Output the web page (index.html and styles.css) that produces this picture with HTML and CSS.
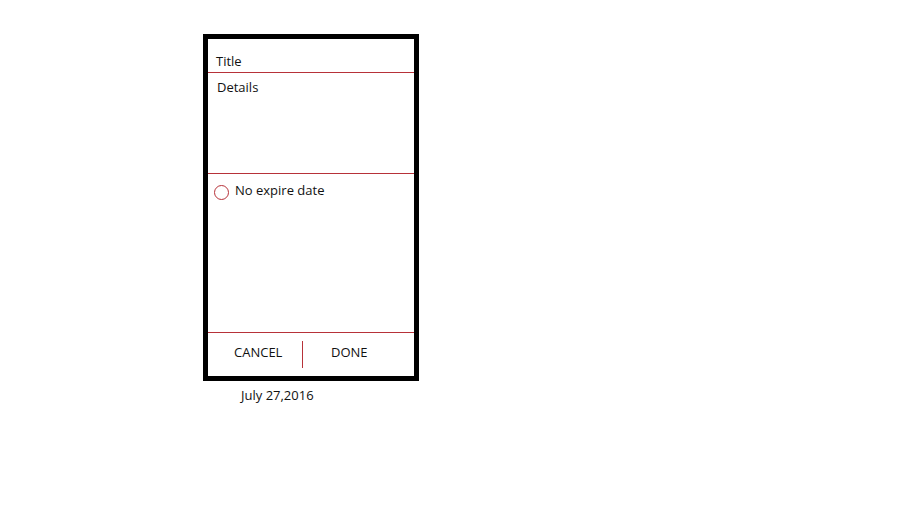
FILE: index.html
```html
<!DOCTYPE html>
<html>
<head>
<meta charset="utf-8">
<link rel="stylesheet" href="styles.css">
</head>
<body>
<div class="page">
  <div class="phone">
    <div class="row title-row"><span class="label">Title</span></div>
    <div class="row details-row"><span class="label">Details</span></div>
    <div class="row option-row">
      <span class="radio"></span>
      <span class="label">No expire date</span>
    </div>
    <div class="actions">
      <span class="btn cancel">CANCEL</span>
      <span class="divider"></span>
      <span class="btn done">DONE</span>
    </div>
  </div>
  <div class="date">July 27,2016</div>
</div>
</body>
</html>
```

FILE: styles.css
```css
html, body {
  margin: 0;
  padding: 0;
  background: #ffffff;
}
body {
  font-family: "Open Sans", "Noto Sans", "DejaVu Sans", sans-serif;
  font-size: 13px;
  color: #111111;
  width: 900px;
  height: 507px;
  overflow: hidden;
}
.page {
  padding-top: 34px;
  padding-left: 203px;
}
.phone {
  box-sizing: border-box;
  width: 216px;
  height: 347px;
  border: 5px solid #000000;
  display: flex;
  flex-direction: column;
}
.row {
  border-bottom: 1px solid #b73239;
  display: flex;
  align-items: flex-start;
}
.title-row {
  height: 33px;
  padding-left: 8px;
  align-items: flex-end;
}
.title-row .label {
  line-height: 17px;
  margin-bottom: 2px;
}
.details-row {
  height: 100px;
  padding-left: 9px;
}
.details-row .label {
  line-height: 17px;
  margin-top: 6px;
}
.option-row {
  height: 158px;
  padding-left: 6px;
}
.radio {
  box-sizing: border-box;
  width: 15px;
  height: 15px;
  border: 1px solid #b73239;
  border-radius: 50%;
  margin-top: 11px;
}
.option-row .label {
  line-height: 17px;
  margin-top: 8px;
  margin-left: 6px;
}
.actions {
  flex: 1;
  display: flex;
  align-items: flex-start;
}
.btn {
  line-height: 17px;
  margin-top: 11px;
}
.cancel {
  margin-left: 26px;
  width: 68px;
}
.divider {
  width: 1px;
  height: 27px;
  background: #b73239;
  margin-top: 8px;
}
.done {
  margin-left: 28px;
}
.date {
  margin-left: 38px;
  margin-top: 6px;
  line-height: 17px;
}
```
